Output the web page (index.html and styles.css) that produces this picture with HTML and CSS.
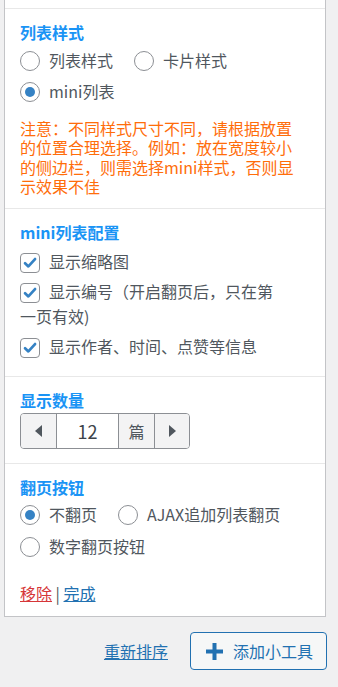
FILE: index.html
```html
<!DOCTYPE html>
<html lang="zh-CN">
<head>
<meta charset="utf-8">
<title>小工具设置</title>
<link rel="stylesheet" href="styles.css">
</head>
<body>
<div class="page">
  <div class="widget">
    <div class="widget-top"></div>

    <div class="section s1">
      <h3 class="title">列表样式</h3>
      <div class="options">
        <label class="opt"><span class="radio"></span>列表样式</label>
        <label class="opt"><span class="radio"></span>卡片样式</label>
        <label class="opt"><span class="radio checked"></span>mini列表</label>
      </div>
      <p class="notice">注意：不同样式尺寸不同，请根据放置的位置合理选择。例如：放在宽度较小的侧边栏，则需选择mini样式，否则显示效果不佳</p>
    </div>

    <div class="section s2">
      <h3 class="title">mini列表配置</h3>
      <div class="checks">
        <label class="chk"><span class="box"><svg viewBox="0 0 20 20" width="18" height="18"><path d="M4.5 10.2 L8.2 13.8 L15.6 5.6" fill="none" stroke="#3582c4" stroke-width="3" stroke-linecap="round" stroke-linejoin="round"/></svg></span>显示缩略图</label>
        <label class="chk"><span class="box"><svg viewBox="0 0 20 20" width="18" height="18"><path d="M4.5 10.2 L8.2 13.8 L15.6 5.6" fill="none" stroke="#3582c4" stroke-width="3" stroke-linecap="round" stroke-linejoin="round"/></svg></span>显示编号（开启翻页后，只在第一页有效)</label>
        <label class="chk"><span class="box"><svg viewBox="0 0 20 20" width="18" height="18"><path d="M4.5 10.2 L8.2 13.8 L15.6 5.6" fill="none" stroke="#3582c4" stroke-width="3" stroke-linecap="round" stroke-linejoin="round"/></svg></span>显示作者、时间、点赞等信息</label>
      </div>
    </div>

    <div class="section s3">
      <h3 class="title">显示数量</h3>
      <div class="spinner">
        <span class="spin-btn"><span class="arrow-left"></span></span>
        <span class="spin-value">12</span>
        <span class="spin-unit">篇</span>
        <span class="spin-btn last"><span class="arrow-right"></span></span>
      </div>
    </div>

    <div class="section s4">
      <h3 class="title">翻页按钮</h3>
      <div class="options">
        <label class="opt"><span class="radio checked"></span>不翻页</label>
        <label class="opt"><span class="radio"></span>AJAX追加列表翻页</label>
        <label class="opt"><span class="radio"></span>数字翻页按钮</label>
      </div>
      <div class="actions"><a class="remove" href="#">移除</a> <span class="sep">|</span> <a class="done" href="#">完成</a></div>
    </div>
  </div>

  <div class="bottom-bar">
    <a class="reorder" href="#">重新排序</a>
    <button class="add-btn" type="button">
      <svg class="plus" viewBox="0 0 17 17" width="17" height="17"><rect x="0" y="6.5" width="17" height="4" fill="#2271b1"/><rect x="6.5" y="0" width="4" height="17" fill="#2271b1"/></svg>
      <span>添加小工具</span>
    </button>
  </div>
</div>
</body>
</html>
```

FILE: styles.css
```css
* { box-sizing: border-box; }

html, body {
  margin: 0;
  padding: 0;
  background: #f0f0f1;
}

body {
  font-family: "Noto Sans CJK SC", "Noto Sans", sans-serif;
  font-size: 16px;
  color: #50575e;
}

.page {
  padding: 0 12px 0 4px;
}

.widget {
  background: #fff;
  border: 1px solid #c3c4c7;
  border-top: none;
}

.widget-top {
  height: 8px;
}

.section {
  border-top: 1px solid #e8e8e8;
  padding: 12px 15px 12px 15px;
}

.title {
  margin: 0;
  font-size: 16px;
  font-weight: bold;
  line-height: 22px;
  color: #1a94f5;
}

.options {
  display: flex;
  flex-wrap: wrap;
  column-gap: 21px;
  row-gap: 6px;
  margin-top: 5px;
}

.s4 .options {
  margin-top: 4px;
  row-gap: 7px;
}

.opt {
  display: flex;
  align-items: center;
  height: 25px;
  line-height: 25px;
  white-space: nowrap;
}

.radio {
  width: 20px;
  height: 20px;
  border: 1px solid #8c8f94;
  border-radius: 50%;
  margin-right: 9px;
  display: flex;
  align-items: center;
  justify-content: center;
  flex: none;
}

.radio.checked::after {
  content: "";
  width: 10px;
  height: 10px;
  border-radius: 50%;
  background: #3582c4;
}

.notice {
  margin: 15px 10px 0 0;
  color: #ff6d0a;
  line-height: 19.33px;
}

.s2 {
  padding-bottom: 17px;
}

.checks {
  margin-top: 6px;
  padding-right: 25px;
}

.chk {
  display: block;
  line-height: 25px;
  margin-top: 5px;
}

.chk:first-child {
  margin-top: 0;
}

.box {
  display: inline-flex;
  align-items: center;
  justify-content: center;
  width: 20px;
  height: 20px;
  border: 1px solid #8c8f94;
  border-radius: 4px;
  margin-right: 9px;
  vertical-align: -4px;
}

.s3 {
  padding-bottom: 14px;
}

.spinner {
  display: inline-flex;
  margin-top: 2px;
  height: 36px;
  border: 1px solid #8c8f94;
  border-radius: 4px;
  overflow: hidden;
}

.spin-btn, .spin-unit {
  width: 36px;
  background: #f3f3f4;
  display: flex;
  align-items: center;
  justify-content: center;
  color: #50575e;
}

.spin-btn {
  border-right: 1px solid #8c8f94;
}

.spin-btn.last {
  border-right: none;
  border-left: 1px solid #8c8f94;
  width: 35px;
}

.spin-unit {
  border-left: 1px solid #8c8f94;
  width: 36px;
}

.spin-value {
  width: 61px;
  display: flex;
  align-items: center;
  justify-content: center;
  color: #3c434a;
  font-size: 18px;
}

.arrow-left {
  width: 0;
  height: 0;
  border-top: 6px solid transparent;
  border-bottom: 6px solid transparent;
  border-right: 7px solid #50575e;
  margin-right: 1px;
}

.arrow-right {
  width: 0;
  height: 0;
  border-top: 6px solid transparent;
  border-bottom: 6px solid transparent;
  border-left: 7px solid #50575e;
  margin-left: 1px;
}

.actions {
  margin-top: 23px;
  line-height: 22px;
}

.actions a {
  text-decoration: underline;
}

.remove {
  color: #d63638;
}

.done {
  color: #2271b1;
}

.sep {
  color: #50575e;
}

.bottom-bar {
  display: flex;
  justify-content: flex-end;
  align-items: center;
  gap: 22px;
  margin-top: 15px;
}

.reorder {
  color: #2271b1;
  text-decoration: underline;
  line-height: 22px;
}

.add-btn {
  display: flex;
  align-items: center;
  gap: 10px;
  height: 38px;
  padding: 0 13px 0 15px;
  background: #f6f7f7;
  border: 1px solid #2271b1;
  border-radius: 4px;
  color: #2271b1;
  font-family: inherit;
  font-size: 16px;
  margin-right: -1px;
}

.plus {
  flex: none;
}
```
